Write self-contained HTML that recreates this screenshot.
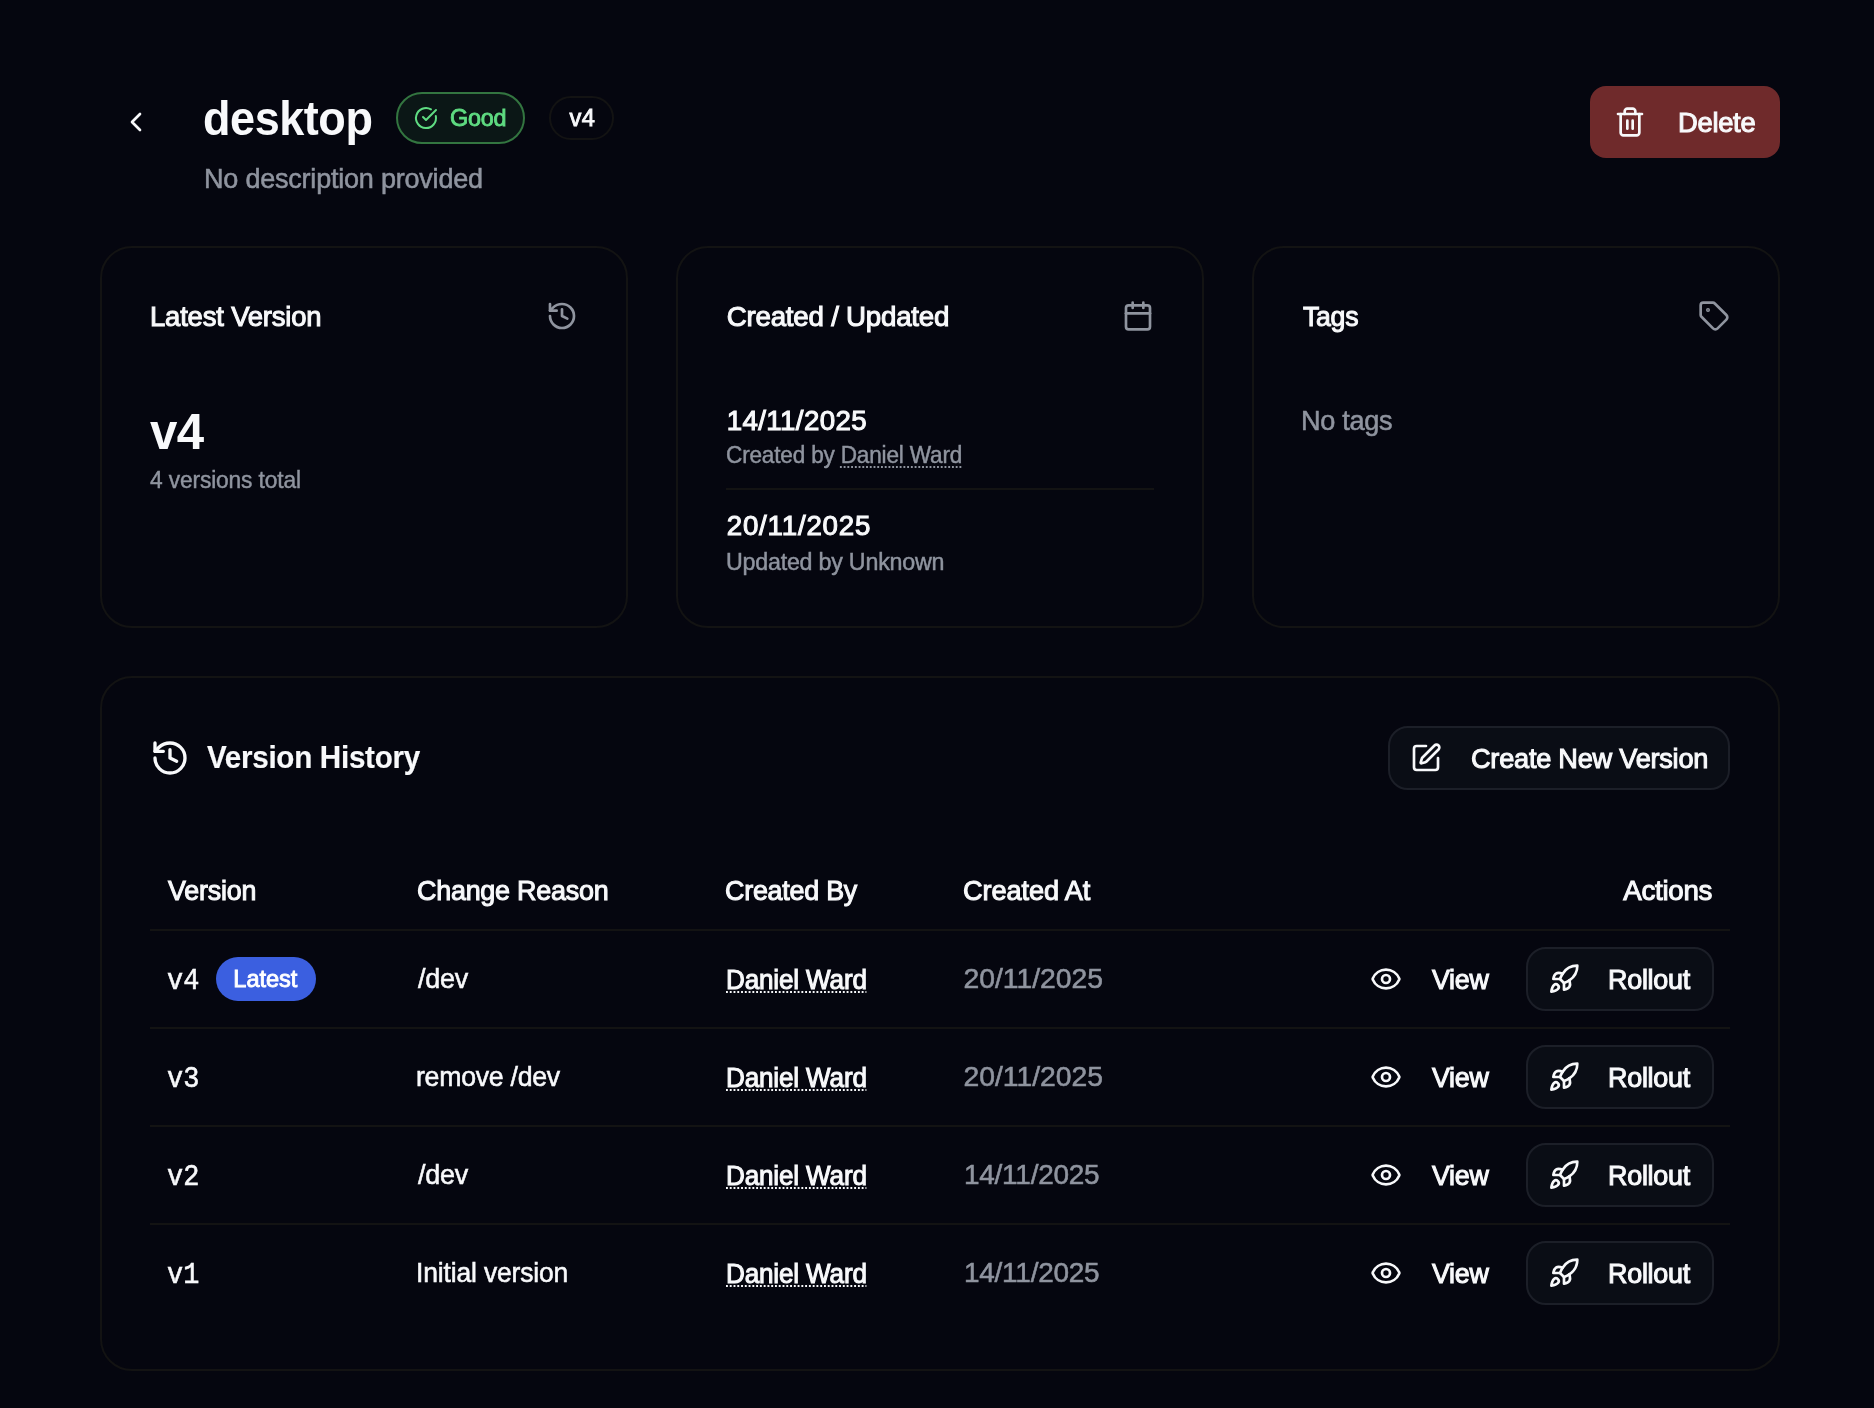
<!DOCTYPE html>
<html lang="en"><head><meta charset="utf-8"><title>desktop</title>
<style>
*{margin:0;padding:0;box-sizing:border-box}
html,body{width:1874px;height:1408px;overflow:hidden;background:#05060f}
body{font-family:'Liberation Sans', sans-serif;color:#f8f9fb}
#root{position:relative;width:1874px;height:1408px;will-change:transform;background:#05060f}
.t{position:absolute;white-space:nowrap;transform-origin:0 50%}
.b{position:absolute}
.i{position:absolute;display:block;overflow:visible}
.dot{text-decoration:underline dotted;text-decoration-thickness:2px;text-underline-offset:3px}
.dot2{text-decoration:underline dotted;text-decoration-thickness:2px;text-underline-offset:3px}
</style></head>
<body>
<div id="root">
<svg class="i" style="left:120px;top:106px" width="32" height="32" viewBox="0 0 24 24" fill="none" stroke="#f8f9fb" stroke-width="2" stroke-linecap="round" stroke-linejoin="round" color="#f8f9fb"><path d="m15 18-6-6 6-6"/></svg>
<div class="t" style="left:203.46px;top:89.47px;font:700 47.7px/60px 'Liberation Sans', sans-serif;color:#f8f9fb;letter-spacing:-0.449px;transform:scaleX(0.9429);">desktop</div>
<div class="b" style="left:396px;top:92px;width:129px;height:52px;border-radius:26px;background:#0b1716;border:2px solid #337540"></div>
<svg class="i" style="left:414px;top:106px" width="24" height="24" viewBox="0 0 24 24" fill="none" stroke="#5fdc82" stroke-width="2" stroke-linecap="round" stroke-linejoin="round" color="#5fdc82"><path d="M21.801 10A10 10 0 1 1 17 3.335"/><path d="m9 11 3 3L22 4"/></svg>
<div class="t" style="left:450.30px;top:102.52px;font:400 23.6px/30px 'Liberation Sans', sans-serif;color:#5fdc82;letter-spacing:-0.242px;-webkit-text-stroke:0.87px #5fdc82;transform:scaleX(0.9904);">Good</div>
<div class="b" style="left:549px;top:96px;width:65px;height:44px;border-radius:22px;background:transparent;border:2px solid #131313"></div>
<div class="t" style="left:569.55px;top:102.52px;font:400 23.6px/30px 'Liberation Sans', sans-serif;color:#f8f9fb;letter-spacing:0.4px;-webkit-text-stroke:0.87px #f8f9fb;">v4</div>
<div class="t" style="left:203.54px;top:160.59px;font:400 28.3px/35px 'Liberation Sans', sans-serif;color:#8f949f;letter-spacing:-0.238px;-webkit-text-stroke:0.57px #8f949f;transform:scaleX(0.9555);">No description provided</div>
<div class="b" style="left:1590px;top:86px;width:190px;height:72px;border-radius:16px;background:#6f2a2b;border:0px solid transparent"></div>
<svg class="i" style="left:1614px;top:106px" width="32" height="32" viewBox="0 0 24 24" fill="none" stroke="#f8f9fb" stroke-width="2" stroke-linecap="round" stroke-linejoin="round" color="#f8f9fb"><path d="M3 6h18"/><path d="M19 6v14c0 1-1 2-2 2H7c-1 0-2-1-2-2V6"/><path d="M8 6V4c0-1 1-2 2-2h4c1 0 2 1 2 2v2"/><line x1="10" x2="10" y1="11" y2="17"/><line x1="14" x2="14" y1="11" y2="17"/></svg>
<div class="t" style="left:1677.81px;top:104.60px;font:400 27.7px/35px 'Liberation Sans', sans-serif;color:#f8f9fb;letter-spacing:-0.281px;-webkit-text-stroke:1.05px #f8f9fb;transform:scaleX(0.9872);">Delete</div>
<div class="b" style="left:100px;top:246px;width:528px;height:382px;border-radius:32px;background:transparent;border:2px solid #131313"></div>
<div class="b" style="left:676px;top:246px;width:528px;height:382px;border-radius:32px;background:transparent;border:2px solid #131313"></div>
<div class="b" style="left:1252px;top:246px;width:528px;height:382px;border-radius:32px;background:transparent;border:2px solid #131313"></div>
<div class="t" style="left:149.71px;top:298.70px;font:400 27.7px/35px 'Liberation Sans', sans-serif;color:#f8f9fb;letter-spacing:-0.175px;-webkit-text-stroke:1.05px #f8f9fb;transform:scaleX(0.9909);">Latest Version</div>
<svg class="i" style="left:546px;top:300px" width="32" height="32" viewBox="0 0 24 24" fill="none" stroke="#8f949f" stroke-width="2" stroke-linecap="round" stroke-linejoin="round" color="#8f949f"><path d="M3 12a9 9 0 1 0 9-9 9.75 9.75 0 0 0-6.74 2.74L3 8"/><path d="M3 3v5h5"/><path d="M12 7v5l4 2"/></svg>
<div class="t" style="left:149.88px;top:399.90px;font:700 50.5px/63px 'Liberation Sans', sans-serif;color:#f8f9fb;letter-spacing:-0.722px;transform:scaleX(0.9748);">v4</div>
<div class="t" style="left:150.20px;top:464.61px;font:400 24.2px/30px 'Liberation Sans', sans-serif;color:#8f949f;letter-spacing:-0.144px;-webkit-text-stroke:0.48px #8f949f;transform:scaleX(0.9409);">4 versions total</div>
<div class="t" style="left:726.75px;top:298.70px;font:400 27.7px/35px 'Liberation Sans', sans-serif;color:#f8f9fb;letter-spacing:-0.225px;-webkit-text-stroke:1.05px #f8f9fb;">Created / Updated</div>
<svg class="i" style="left:1122px;top:300px" width="32" height="32" viewBox="0 0 24 24" fill="none" stroke="#8f949f" stroke-width="2" stroke-linecap="round" stroke-linejoin="round" color="#8f949f"><path d="M8 2v4"/><path d="M16 2v4"/><rect width="18" height="18" x="3" y="4" rx="2"/><path d="M3 10h18"/></svg>
<div class="t" style="left:726.65px;top:402.60px;font:400 27.7px/35px 'Liberation Sans', sans-serif;color:#f8f9fb;letter-spacing:0.4px;-webkit-text-stroke:1.05px #f8f9fb;">14/11/2025</div>
<div class="t" style="left:725.62px;top:440.31px;font:400 24.2px/30px 'Liberation Sans', sans-serif;color:#8f949f;letter-spacing:-0.199px;-webkit-text-stroke:0.48px #8f949f;transform:scaleX(0.9338);">Created by <span class="dot">Daniel Ward</span></div>
<div class="b" style="left:726px;top:488px;width:428px;height:2px;border-radius:0px;background:#131313;border:0px solid transparent"></div>
<div class="t" style="left:726.70px;top:508.40px;font:400 27.7px/35px 'Liberation Sans', sans-serif;color:#f8f9fb;letter-spacing:0.8px;-webkit-text-stroke:1.05px #f8f9fb;">20/11/2025</div>
<div class="t" style="left:725.84px;top:546.91px;font:400 24.2px/30px 'Liberation Sans', sans-serif;color:#8f949f;letter-spacing:-0.243px;-webkit-text-stroke:0.48px #8f949f;transform:scaleX(0.9617);">Updated by Unknown</div>
<div class="t" style="left:1302.85px;top:298.70px;font:400 27.7px/35px 'Liberation Sans', sans-serif;color:#f8f9fb;letter-spacing:-0.281px;-webkit-text-stroke:1.05px #f8f9fb;transform:scaleX(0.9625);">Tags</div>
<svg class="i" style="left:1698px;top:300px" width="32" height="32" viewBox="0 0 24 24" fill="none" stroke="#8f949f" stroke-width="2" stroke-linecap="round" stroke-linejoin="round" color="#8f949f"><path d="M12.586 2.586A2 2 0 0 0 11.172 2H4a2 2 0 0 0-2 2v7.172a2 2 0 0 0 .586 1.414l8.704 8.704a2.426 2.426 0 0 0 3.42 0l6.58-6.58a2.426 2.426 0 0 0 0-3.42z"/><circle cx="7.5" cy="7.5" r=".5" fill="currentColor"/></svg>
<div class="t" style="left:1300.78px;top:402.99px;font:400 28.3px/35px 'Liberation Sans', sans-serif;color:#8f949f;letter-spacing:-0.33px;-webkit-text-stroke:0.57px #8f949f;transform:scaleX(0.9582);">No tags</div>
<div class="b" style="left:100px;top:676px;width:1680px;height:695px;border-radius:32px;background:transparent;border:2px solid #131313"></div>
<svg class="i" style="left:150px;top:738px" width="40" height="40" viewBox="0 0 24 24" fill="none" stroke="#f8f9fb" stroke-width="2" stroke-linecap="round" stroke-linejoin="round" color="#f8f9fb"><path d="M3 12a9 9 0 1 0 9-9 9.75 9.75 0 0 0-6.74 2.74L3 8"/><path d="M3 3v5h5"/><path d="M12 7v5l4 2"/></svg>
<div class="t" style="left:207.05px;top:738.22px;font:700 31.4px/39px 'Liberation Sans', sans-serif;color:#f8f9fb;letter-spacing:-0.309px;-webkit-text-stroke:0.16px #f8f9fb;transform:scaleX(0.9433);">Version History</div>
<div class="b" style="left:1388px;top:726px;width:342px;height:64px;border-radius:20px;background:#0a0d15;border:2px solid #1c1f28"></div>
<svg class="i" style="left:1410px;top:742px" width="32" height="32" viewBox="0 0 24 24" fill="none" stroke="#f8f9fb" stroke-width="2" stroke-linecap="round" stroke-linejoin="round" color="#f8f9fb"><path d="M12 3H5a2 2 0 0 0-2 2v14a2 2 0 0 0 2 2h14a2 2 0 0 0 2-2v-7"/><path d="M18.375 2.625a1 1 0 0 1 3 3l-9.013 9.014a2 2 0 0 1-.853.505l-2.873.84a.5.5 0 0 1-.62-.62l.84-2.873a2 2 0 0 1 .506-.852z"/></svg>
<div class="t" style="left:1470.55px;top:740.90px;font:400 27.7px/35px 'Liberation Sans', sans-serif;color:#f8f9fb;letter-spacing:-0.263px;-webkit-text-stroke:1.05px #f8f9fb;transform:scaleX(0.9819);">Create New Version</div>
<div class="t" style="left:167.77px;top:873.10px;font:400 27.7px/35px 'Liberation Sans', sans-serif;color:#f8f9fb;letter-spacing:-0.147px;-webkit-text-stroke:1.05px #f8f9fb;transform:scaleX(0.9677);">Version</div>
<div class="t" style="left:417.20px;top:873.10px;font:400 27.7px/35px 'Liberation Sans', sans-serif;color:#f8f9fb;letter-spacing:-0.262px;-webkit-text-stroke:1.05px #f8f9fb;transform:scaleX(0.9728);">Change Reason</div>
<div class="t" style="left:725.35px;top:873.10px;font:400 27.7px/35px 'Liberation Sans', sans-serif;color:#f8f9fb;letter-spacing:-0.255px;-webkit-text-stroke:1.05px #f8f9fb;transform:scaleX(0.9711);">Created By</div>
<div class="t" style="left:963.30px;top:873.10px;font:400 27.7px/35px 'Liberation Sans', sans-serif;color:#f8f9fb;letter-spacing:-0.115px;-webkit-text-stroke:1.05px #f8f9fb;transform:scaleX(0.9817);">Created At</div>
<div class="t" style="left:1623.25px;top:873.10px;font:400 27.7px/35px 'Liberation Sans', sans-serif;color:#f8f9fb;letter-spacing:-0.267px;-webkit-text-stroke:1.05px #f8f9fb;">Actions</div>
<div class="b" style="left:150px;top:929px;width:1580px;height:2px;border-radius:0px;background:#131313;border:0px solid transparent"></div>
<div class="b" style="left:150px;top:1027px;width:1580px;height:2px;border-radius:0px;background:#131313;border:0px solid transparent"></div>
<div class="t" style="left:166.60px;top:962.50px;font:400 29.3px/37px 'Liberation Mono', monospace;color:#f8f9fb;letter-spacing:0.002px;-webkit-text-stroke:0.59px #f8f9fb;transform:scaleX(0.9176);">v4</div>
<div class="b" style="left:216px;top:957px;width:100px;height:44px;border-radius:22px;background:#3b5fe0;border:0px solid transparent"></div>
<div class="t" style="left:233.35px;top:964.22px;font:400 23.6px/30px 'Liberation Sans', sans-serif;color:#ffffff;letter-spacing:-0.04px;-webkit-text-stroke:0.87px #ffffff;">Latest</div>
<div class="t" style="left:417.60px;top:961.49px;font:400 28.3px/35px 'Liberation Sans', sans-serif;color:#f8f9fb;letter-spacing:-0.245px;-webkit-text-stroke:0.57px #f8f9fb;transform:scaleX(0.9514);">/dev</div>
<div class="t" style="left:725.51px;top:961.70px;font:400 27.7px/35px 'Liberation Sans', sans-serif;color:#f8f9fb;letter-spacing:-0.177px;-webkit-text-stroke:1.05px #f8f9fb;transform:scaleX(0.9423);"><span class="dot2">Daniel Ward</span></div>
<div class="t" style="left:963.60px;top:961.49px;font:400 28.3px/35px 'Liberation Sans', sans-serif;color:#8f949f;letter-spacing:-0.023px;-webkit-text-stroke:0.57px #8f949f;">20/11/2025</div>
<svg class="i" style="left:1370px;top:963px" width="32" height="32" viewBox="0 0 24 24" fill="none" stroke="#f8f9fb" stroke-width="2" stroke-linecap="round" stroke-linejoin="round" color="#f8f9fb"><path d="M2.062 12.348a1 1 0 0 1 0-.696 10.75 10.75 0 0 1 19.876 0 1 1 0 0 1 0 .696 10.75 10.75 0 0 1-19.876 0"/><circle cx="12" cy="12" r="3"/></svg>
<div class="t" style="left:1431.77px;top:961.70px;font:400 27.7px/35px 'Liberation Sans', sans-serif;color:#f8f9fb;letter-spacing:-0.296px;-webkit-text-stroke:1.05px #f8f9fb;transform:scaleX(0.9691);">View</div>
<div class="b" style="left:1526px;top:947px;width:188px;height:64px;border-radius:20px;background:#0a0d15;border:2px solid #1c1f28"></div>
<svg class="i" style="left:1548px;top:963px" width="32" height="32" viewBox="0 0 24 24" fill="none" stroke="#f8f9fb" stroke-width="2" stroke-linecap="round" stroke-linejoin="round" color="#f8f9fb"><path d="M4.5 16.5c-1.5 1.26-2 5-2 5s3.74-.5 5-2c.71-.84.7-2.13-.09-2.91a2.18 2.18 0 0 0-2.91-.09z"/><path d="m12 15-3-3a22 22 0 0 1 2-3.95A12.88 12.88 0 0 1 22 2c0 2.72-.78 7.5-6 11a22.35 22.35 0 0 1-4 2z"/><path d="M9 12H4s.55-3.03 2-4c1.62-1.08 5 0 5 0"/><path d="M12 15v5s3.03-.55 4-2c1.08-1.62 0-5 0-5"/></svg>
<div class="t" style="left:1608.23px;top:961.70px;font:400 27.7px/35px 'Liberation Sans', sans-serif;color:#f8f9fb;letter-spacing:-0.275px;-webkit-text-stroke:1.05px #f8f9fb;transform:scaleX(0.9731);">Rollout</div>
<div class="b" style="left:150px;top:1125px;width:1580px;height:2px;border-radius:0px;background:#131313;border:0px solid transparent"></div>
<div class="t" style="left:167.10px;top:1060.50px;font:400 29.3px/37px 'Liberation Mono', monospace;color:#f8f9fb;letter-spacing:0.002px;-webkit-text-stroke:0.59px #f8f9fb;transform:scaleX(0.9176);">v3</div>
<div class="t" style="left:416.41px;top:1059.49px;font:400 28.3px/35px 'Liberation Sans', sans-serif;color:#f8f9fb;letter-spacing:-0.293px;-webkit-text-stroke:0.57px #f8f9fb;transform:scaleX(0.9434);">remove /dev</div>
<div class="t" style="left:725.51px;top:1059.70px;font:400 27.7px/35px 'Liberation Sans', sans-serif;color:#f8f9fb;letter-spacing:-0.177px;-webkit-text-stroke:1.05px #f8f9fb;transform:scaleX(0.9423);"><span class="dot2">Daniel Ward</span></div>
<div class="t" style="left:963.60px;top:1059.49px;font:400 28.3px/35px 'Liberation Sans', sans-serif;color:#8f949f;letter-spacing:-0.023px;-webkit-text-stroke:0.57px #8f949f;">20/11/2025</div>
<svg class="i" style="left:1370px;top:1061px" width="32" height="32" viewBox="0 0 24 24" fill="none" stroke="#f8f9fb" stroke-width="2" stroke-linecap="round" stroke-linejoin="round" color="#f8f9fb"><path d="M2.062 12.348a1 1 0 0 1 0-.696 10.75 10.75 0 0 1 19.876 0 1 1 0 0 1 0 .696 10.75 10.75 0 0 1-19.876 0"/><circle cx="12" cy="12" r="3"/></svg>
<div class="t" style="left:1431.77px;top:1059.70px;font:400 27.7px/35px 'Liberation Sans', sans-serif;color:#f8f9fb;letter-spacing:-0.296px;-webkit-text-stroke:1.05px #f8f9fb;transform:scaleX(0.9691);">View</div>
<div class="b" style="left:1526px;top:1045px;width:188px;height:64px;border-radius:20px;background:#0a0d15;border:2px solid #1c1f28"></div>
<svg class="i" style="left:1548px;top:1061px" width="32" height="32" viewBox="0 0 24 24" fill="none" stroke="#f8f9fb" stroke-width="2" stroke-linecap="round" stroke-linejoin="round" color="#f8f9fb"><path d="M4.5 16.5c-1.5 1.26-2 5-2 5s3.74-.5 5-2c.71-.84.7-2.13-.09-2.91a2.18 2.18 0 0 0-2.91-.09z"/><path d="m12 15-3-3a22 22 0 0 1 2-3.95A12.88 12.88 0 0 1 22 2c0 2.72-.78 7.5-6 11a22.35 22.35 0 0 1-4 2z"/><path d="M9 12H4s.55-3.03 2-4c1.62-1.08 5 0 5 0"/><path d="M12 15v5s3.03-.55 4-2c1.08-1.62 0-5 0-5"/></svg>
<div class="t" style="left:1608.23px;top:1059.70px;font:400 27.7px/35px 'Liberation Sans', sans-serif;color:#f8f9fb;letter-spacing:-0.275px;-webkit-text-stroke:1.05px #f8f9fb;transform:scaleX(0.9731);">Rollout</div>
<div class="b" style="left:150px;top:1223px;width:1580px;height:2px;border-radius:0px;background:#131313;border:0px solid transparent"></div>
<div class="t" style="left:167.10px;top:1158.50px;font:400 29.3px/37px 'Liberation Mono', monospace;color:#f8f9fb;letter-spacing:0.002px;-webkit-text-stroke:0.59px #f8f9fb;transform:scaleX(0.9176);">v2</div>
<div class="t" style="left:417.60px;top:1157.49px;font:400 28.3px/35px 'Liberation Sans', sans-serif;color:#f8f9fb;letter-spacing:-0.245px;-webkit-text-stroke:0.57px #f8f9fb;transform:scaleX(0.9514);">/dev</div>
<div class="t" style="left:725.51px;top:1157.70px;font:400 27.7px/35px 'Liberation Sans', sans-serif;color:#f8f9fb;letter-spacing:-0.177px;-webkit-text-stroke:1.05px #f8f9fb;transform:scaleX(0.9423);"><span class="dot2">Daniel Ward</span></div>
<div class="t" style="left:963.61px;top:1157.49px;font:400 28.3px/35px 'Liberation Sans', sans-serif;color:#8f949f;letter-spacing:-0.244px;-webkit-text-stroke:0.57px #8f949f;transform:scaleX(0.9875);">14/11/2025</div>
<svg class="i" style="left:1370px;top:1159px" width="32" height="32" viewBox="0 0 24 24" fill="none" stroke="#f8f9fb" stroke-width="2" stroke-linecap="round" stroke-linejoin="round" color="#f8f9fb"><path d="M2.062 12.348a1 1 0 0 1 0-.696 10.75 10.75 0 0 1 19.876 0 1 1 0 0 1 0 .696 10.75 10.75 0 0 1-19.876 0"/><circle cx="12" cy="12" r="3"/></svg>
<div class="t" style="left:1431.77px;top:1157.70px;font:400 27.7px/35px 'Liberation Sans', sans-serif;color:#f8f9fb;letter-spacing:-0.296px;-webkit-text-stroke:1.05px #f8f9fb;transform:scaleX(0.9691);">View</div>
<div class="b" style="left:1526px;top:1143px;width:188px;height:64px;border-radius:20px;background:#0a0d15;border:2px solid #1c1f28"></div>
<svg class="i" style="left:1548px;top:1159px" width="32" height="32" viewBox="0 0 24 24" fill="none" stroke="#f8f9fb" stroke-width="2" stroke-linecap="round" stroke-linejoin="round" color="#f8f9fb"><path d="M4.5 16.5c-1.5 1.26-2 5-2 5s3.74-.5 5-2c.71-.84.7-2.13-.09-2.91a2.18 2.18 0 0 0-2.91-.09z"/><path d="m12 15-3-3a22 22 0 0 1 2-3.95A12.88 12.88 0 0 1 22 2c0 2.72-.78 7.5-6 11a22.35 22.35 0 0 1-4 2z"/><path d="M9 12H4s.55-3.03 2-4c1.62-1.08 5 0 5 0"/><path d="M12 15v5s3.03-.55 4-2c1.08-1.62 0-5 0-5"/></svg>
<div class="t" style="left:1608.23px;top:1157.70px;font:400 27.7px/35px 'Liberation Sans', sans-serif;color:#f8f9fb;letter-spacing:-0.275px;-webkit-text-stroke:1.05px #f8f9fb;transform:scaleX(0.9731);">Rollout</div>
<div class="t" style="left:167.05px;top:1256.50px;font:400 29.3px/37px 'Liberation Mono', monospace;color:#f8f9fb;letter-spacing:0.002px;-webkit-text-stroke:0.59px #f8f9fb;transform:scaleX(0.9171);">v1</div>
<div class="t" style="left:416.13px;top:1255.49px;font:400 28.3px/35px 'Liberation Sans', sans-serif;color:#f8f9fb;letter-spacing:-0.158px;-webkit-text-stroke:0.57px #f8f9fb;transform:scaleX(0.9348);">Initial version</div>
<div class="t" style="left:725.51px;top:1255.70px;font:400 27.7px/35px 'Liberation Sans', sans-serif;color:#f8f9fb;letter-spacing:-0.177px;-webkit-text-stroke:1.05px #f8f9fb;transform:scaleX(0.9423);"><span class="dot2">Daniel Ward</span></div>
<div class="t" style="left:963.61px;top:1255.49px;font:400 28.3px/35px 'Liberation Sans', sans-serif;color:#8f949f;letter-spacing:-0.244px;-webkit-text-stroke:0.57px #8f949f;transform:scaleX(0.9875);">14/11/2025</div>
<svg class="i" style="left:1370px;top:1257px" width="32" height="32" viewBox="0 0 24 24" fill="none" stroke="#f8f9fb" stroke-width="2" stroke-linecap="round" stroke-linejoin="round" color="#f8f9fb"><path d="M2.062 12.348a1 1 0 0 1 0-.696 10.75 10.75 0 0 1 19.876 0 1 1 0 0 1 0 .696 10.75 10.75 0 0 1-19.876 0"/><circle cx="12" cy="12" r="3"/></svg>
<div class="t" style="left:1431.77px;top:1255.70px;font:400 27.7px/35px 'Liberation Sans', sans-serif;color:#f8f9fb;letter-spacing:-0.296px;-webkit-text-stroke:1.05px #f8f9fb;transform:scaleX(0.9691);">View</div>
<div class="b" style="left:1526px;top:1241px;width:188px;height:64px;border-radius:20px;background:#0a0d15;border:2px solid #1c1f28"></div>
<svg class="i" style="left:1548px;top:1257px" width="32" height="32" viewBox="0 0 24 24" fill="none" stroke="#f8f9fb" stroke-width="2" stroke-linecap="round" stroke-linejoin="round" color="#f8f9fb"><path d="M4.5 16.5c-1.5 1.26-2 5-2 5s3.74-.5 5-2c.71-.84.7-2.13-.09-2.91a2.18 2.18 0 0 0-2.91-.09z"/><path d="m12 15-3-3a22 22 0 0 1 2-3.95A12.88 12.88 0 0 1 22 2c0 2.72-.78 7.5-6 11a22.35 22.35 0 0 1-4 2z"/><path d="M9 12H4s.55-3.03 2-4c1.62-1.08 5 0 5 0"/><path d="M12 15v5s3.03-.55 4-2c1.08-1.62 0-5 0-5"/></svg>
<div class="t" style="left:1608.23px;top:1255.70px;font:400 27.7px/35px 'Liberation Sans', sans-serif;color:#f8f9fb;letter-spacing:-0.275px;-webkit-text-stroke:1.05px #f8f9fb;transform:scaleX(0.9731);">Rollout</div>
</div>
</body></html>
